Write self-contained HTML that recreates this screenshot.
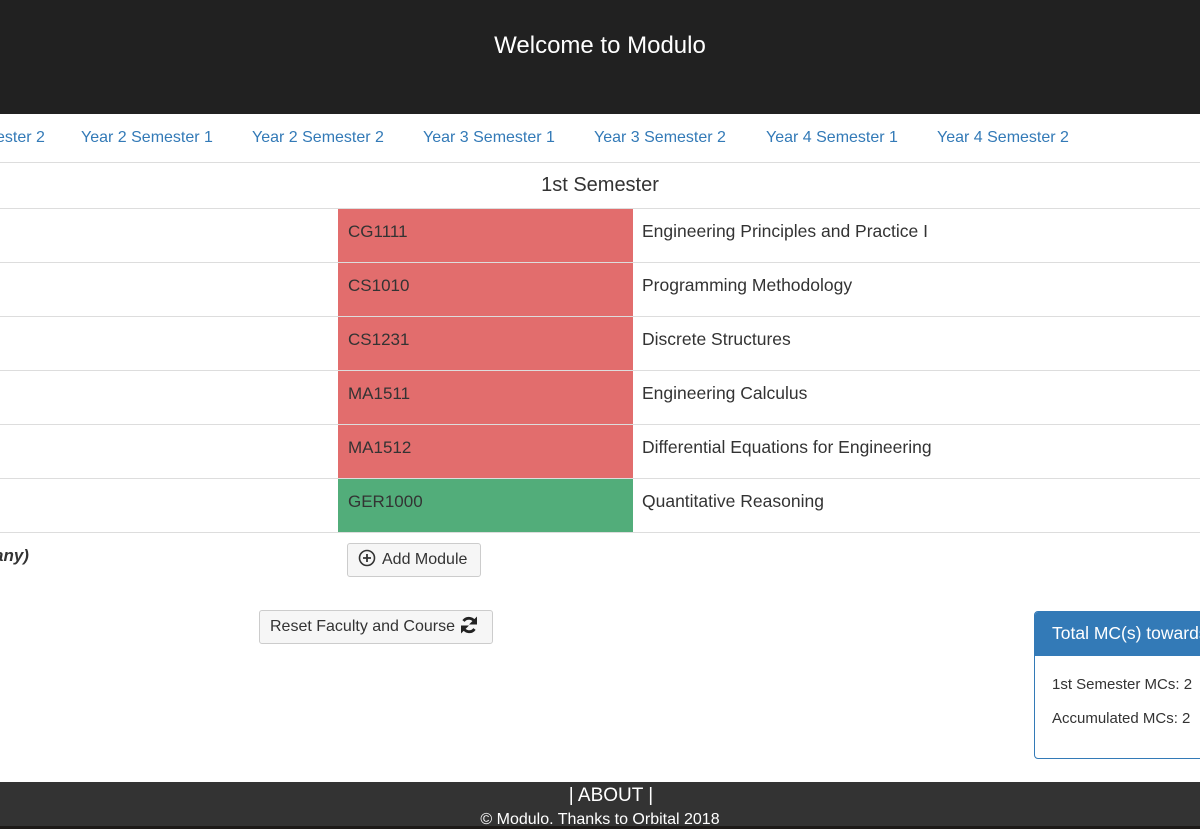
<!DOCTYPE html>
<html><head><meta charset="utf-8"><style>
*{margin:0;padding:0;box-sizing:border-box}
body{width:1200px;height:829px;overflow:hidden;position:relative;background:#fff;font-family:"Liberation Sans",Arial,sans-serif;color:#333}
.a{position:absolute;white-space:nowrap}
.hdr{left:0;top:0;width:1200px;height:114px;background:#212121}
.nav{font-size:16px;color:#337ab7;top:129px}
.line{position:absolute;left:0;width:1200px;height:1px;background:#ddd}
.cell{position:absolute;left:338px;width:295px;height:53px;font-size:17px;padding:13px 10px;color:#333}
.red{background:#e26d6d}.grn{background:#52ad7a}
.nm{left:642px;font-size:17.5px;color:#333}
.btn{position:absolute;white-space:nowrap;border:1px solid #ccc;border-radius:3px;background:#f6f6f6;font-size:16px;color:#333;padding:0 10px;line-height:32px;height:34px}
</style></head><body>
<div class="a hdr"></div>
<div class="a" style="left:0;width:1200px;top:32px;text-align:center;color:#fff;font-size:24px">Welcome to Modulo</div>
<div class="a nav" style="left:-4px">ester 2</div>
<div class="a nav" style="left:81px">Year 2 Semester 1</div>
<div class="a nav" style="left:252px">Year 2 Semester 2</div>
<div class="a nav" style="left:423px">Year 3 Semester 1</div>
<div class="a nav" style="left:594px">Year 3 Semester 2</div>
<div class="a nav" style="left:766px">Year 4 Semester 1</div>
<div class="a nav" style="left:937px">Year 4 Semester 2</div>
<div class="line" style="top:162px"></div>
<div class="a" style="left:0;width:1200px;top:174px;text-align:center;font-size:20px">1st Semester</div>
<div class="line" style="top:208px"></div>
<div class="line" style="top:262px"></div>
<div class="line" style="top:316px"></div>
<div class="line" style="top:370px"></div>
<div class="line" style="top:424px"></div>
<div class="line" style="top:478px"></div>
<div class="line" style="top:532px"></div>
<div class="cell red" style="top:209px">CG1111</div>
<div class="cell red" style="top:263px">CS1010</div>
<div class="cell red" style="top:317px">CS1231</div>
<div class="cell red" style="top:371px">MA1511</div>
<div class="cell red" style="top:425px">MA1512</div>
<div class="cell grn" style="top:479px">GER1000</div>
<div class="a nm" style="top:221px">Engineering Principles and Practice I</div>
<div class="a nm" style="top:275px">Programming Methodology</div>
<div class="a nm" style="top:329px">Discrete Structures</div>
<div class="a nm" style="top:383px">Engineering Calculus</div>
<div class="a nm" style="top:437px">Differential Equations for Engineering</div>
<div class="a nm" style="top:491px">Quantitative Reasoning</div>
<div class="a" style="left:-6px;top:546px;font-size:17px;font-weight:bold;font-style:italic">any)</div>
<div class="btn" style="left:347px;top:543px;width:134px"><svg width="18" height="18" viewBox="0 0 18 18" style="vertical-align:-3px;margin-right:6px"><circle cx="9" cy="9" r="7.5" fill="none" stroke="#333" stroke-width="1.6"/><path d="M9 5v8M5 9h8" stroke="#333" stroke-width="1.8"/></svg>Add Module</div>
<div class="btn" style="left:259px;top:610px;width:234px">Reset Faculty and Course <svg width="20" height="20" viewBox="0 0 20 20" style="vertical-align:-4px"><path d="M16 8A6.5 6.5 0 0 0 4.5 6" fill="none" stroke="#222" stroke-width="2.8"/><path d="M4 12a6.5 6.5 0 0 0 11.5 2" fill="none" stroke="#222" stroke-width="2.8"/><path d="M18 1.5v8h-8z" fill="#222"/><path d="M2 18.5v-8h8z" fill="#222"/></svg></div>
<div class="a" style="left:1034px;top:611px;width:180px;height:148px;border:1px solid #337ab7;border-radius:4px;overflow:hidden">
<div style="background:#337ab7;height:44px;color:#fff;font-size:17.5px;padding:11px 0 0 17px">Total MC(s) towards</div>
<div style="font-size:15px;padding:12px 0 0 17px;line-height:34px">1st Semester MCs: 2<br>Accumulated MCs: 2</div>
</div>
<div class="a" style="left:0;top:782px;width:1200px;height:47px;background:#333"></div>
<div class="a" style="left:0;top:826px;width:1200px;height:3px;background:#1d1a18"></div>
<div class="a" style="left:11px;width:1200px;top:785px;text-align:center;color:#fff;font-size:19px">| ABOUT |</div>
<div class="a" style="left:0;width:1200px;top:811px;text-align:center;color:#fff;font-size:16px">© Modulo. Thanks to Orbital 2018</div>
</body></html>
